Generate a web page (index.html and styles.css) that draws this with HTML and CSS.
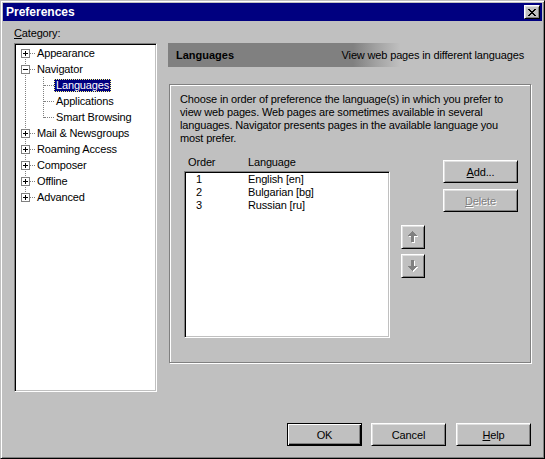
FILE: index.html
```html
<!DOCTYPE html>
<html>
<head>
<meta charset="utf-8">
<title>Preferences</title>
<link rel="stylesheet" href="styles.css">
</head>
<body>
<div class="window">
  <div class="titlebar">
    <span class="title">Preferences</span>
    <button class="btn close" type="button" aria-label="Close">
      <svg width="8" height="7" viewBox="0 0 8 7" shape-rendering="crispEdges"><path d="M0 0h2v1h-2zM6 0h2v1h-2zM1 1h2v1h-2zM5 1h2v1h-2zM2 2h4v1h-4zM3 3h2v1h-2zM2 4h4v1h-4zM1 5h2v1h-2zM5 5h2v1h-2zM0 6h2v1h-2zM6 6h2v1h-2z" fill="#000"/></svg>
    </button>
  </div>
  <div class="content">
    <div class="main">
      <div class="cat-label"><u>C</u>ategory:</div>
      <div class="tree">
        <div class="nodes">
          <div class="node"><svg class="exp" width="9" height="9" viewBox="0 0 9 9" shape-rendering="crispEdges"><path d="M0.5 0.5h8v8h-8z" fill="#fff" stroke="#808080"/><path d="M2 4h5v1h-5zM4 2h1v5h-1z" fill="#000"/></svg><span class="hline"></span><span class="lbl">Appearance</span></div>
          <div class="node"><svg class="exp" width="9" height="9" viewBox="0 0 9 9" shape-rendering="crispEdges"><path d="M0.5 0.5h8v8h-8z" fill="#fff" stroke="#808080"/><path d="M2 4h5v1h-5z" fill="#000"/></svg><span class="hline"></span><span class="lbl">Navigator</span></div>
          <div class="children">
            <div class="node child"><span class="hline long"></span><span class="lbl sel">Languages</span></div>
            <div class="node child"><span class="hline long"></span><span class="lbl">Applications</span></div>
            <div class="node child"><span class="hline long"></span><span class="lbl">Smart Browsing</span></div>
          </div>
          <div class="node"><svg class="exp" width="9" height="9" viewBox="0 0 9 9" shape-rendering="crispEdges"><path d="M0.5 0.5h8v8h-8z" fill="#fff" stroke="#808080"/><path d="M2 4h5v1h-5zM4 2h1v5h-1z" fill="#000"/></svg><span class="hline"></span><span class="lbl">Mail &amp; Newsgroups</span></div>
          <div class="node"><svg class="exp" width="9" height="9" viewBox="0 0 9 9" shape-rendering="crispEdges"><path d="M0.5 0.5h8v8h-8z" fill="#fff" stroke="#808080"/><path d="M2 4h5v1h-5zM4 2h1v5h-1z" fill="#000"/></svg><span class="hline"></span><span class="lbl">Roaming Access</span></div>
          <div class="node"><svg class="exp" width="9" height="9" viewBox="0 0 9 9" shape-rendering="crispEdges"><path d="M0.5 0.5h8v8h-8z" fill="#fff" stroke="#808080"/><path d="M2 4h5v1h-5zM4 2h1v5h-1z" fill="#000"/></svg><span class="hline"></span><span class="lbl">Composer</span></div>
          <div class="node"><svg class="exp" width="9" height="9" viewBox="0 0 9 9" shape-rendering="crispEdges"><path d="M0.5 0.5h8v8h-8z" fill="#fff" stroke="#808080"/><path d="M2 4h5v1h-5zM4 2h1v5h-1z" fill="#000"/></svg><span class="hline"></span><span class="lbl">Offline</span></div>
          <div class="node"><svg class="exp" width="9" height="9" viewBox="0 0 9 9" shape-rendering="crispEdges"><path d="M0.5 0.5h8v8h-8z" fill="#fff" stroke="#808080"/><path d="M2 4h5v1h-5zM4 2h1v5h-1z" fill="#000"/></svg><span class="hline"></span><span class="lbl">Advanced</span></div>
        </div>
      </div>
      <div class="panel">
        <div class="phead">
          <span class="phead-title">Languages</span>
          <span class="phead-sub">View web pages in different languages</span>
        </div>
        <div class="group">
          <p class="desc">Choose in order of preference the language(s) in which you prefer to<br>view web pages. Web pages are sometimes available in several<br>languages. Navigator presents pages in the available language you<br>most prefer.</p>
          <div class="lang-row">
            <div class="listcol">
              <div class="list-head"><span class="h-order">Order</span><span>Language</span></div>
              <div class="listbox">
                <div class="lrow"><span class="num">1</span><span>English [en]</span></div>
                <div class="lrow"><span class="num">2</span><span>Bulgarian [bg]</span></div>
                <div class="lrow"><span class="num">3</span><span>Russian [ru]</span></div>
              </div>
            </div>
            <div class="arrows">
              <button class="btn abtn" type="button" aria-label="Move up">
                <svg width="10" height="12" viewBox="0 0 10 12" shape-rendering="crispEdges"><path transform="translate(1 1)" d="M4 0h1v1h-1zM3 1h3v1h-3zM2 2h5v1h-5zM1 3h7v1h-7zM0 4h9v1h-9zM3 5h3v6h-3z" fill="#fff"/><path d="M4 0h1v1h-1zM3 1h3v1h-3zM2 2h5v1h-5zM1 3h7v1h-7zM0 4h9v1h-9zM3 5h3v6h-3z" fill="#808080"/></svg>
              </button>
              <button class="btn abtn" type="button" aria-label="Move down">
                <svg width="10" height="12" viewBox="0 0 10 12" shape-rendering="crispEdges"><path transform="translate(1 1)" d="M3 0h3v6h-3zM0 6h9v1h-9zM1 7h7v1h-7zM2 8h5v1h-5zM3 9h3v1h-3zM4 10h1v1h-1z" fill="#fff"/><path d="M3 0h3v6h-3zM0 6h9v1h-9zM1 7h7v1h-7zM2 8h5v1h-5zM3 9h3v1h-3zM4 10h1v1h-1z" fill="#808080"/></svg>
              </button>
            </div>
            <div class="actions">
              <button class="btn wide" type="button"><u>A</u>dd...</button>
              <button class="btn wide disabled" type="button"><u>D</u>elete</button>
            </div>
          </div>
        </div>
      </div>
    </div>
    <div class="footer">
      <button class="btn wide default" type="button">OK</button>
      <button class="btn wide" type="button">Cancel</button>
      <button class="btn wide help" type="button"><u>H</u>elp</button>
    </div>
  </div>
</div>
</body>
</html>
```

FILE: styles.css
```css
html, body {
  margin: 0;
  padding: 0;
  background: #c0c0c0;
}

body {
  font-family: "Liberation Sans", Arial, sans-serif;
  font-size: 11px;
  letter-spacing: -0.15px;
  color: #000;
}

.window {
  box-sizing: border-box;
  width: 545px;
  height: 459px;
  background: #c0c0c0;
  border: 1px solid;
  border-color: #c0c0c0 #000 #000 #c0c0c0;
  box-shadow: inset 1px 1px #fff, inset -1px -1px #808080;
  padding: 2px;
  display: flex;
  flex-direction: column;
}

.titlebar {
  height: 18px;
  flex: none;
  background: #000080;
  color: #fff;
  display: flex;
  align-items: center;
  justify-content: space-between;
  padding-left: 3px;
}

.title {
  font-weight: bold;
  font-size: 12px;
  letter-spacing: 0;
}

.btn {
  box-sizing: border-box;
  background: #c0c0c0;
  border: 1px solid;
  border-color: #fff #000 #000 #fff;
  box-shadow: inset 1px 1px #dfdfdf, inset -1px -1px #808080;
  font-family: "Liberation Sans", Arial, sans-serif;
  font-size: 11px;
  letter-spacing: -0.15px;
  color: #000;
  padding: 0;
  margin: 0;
  display: flex;
  align-items: center;
  justify-content: center;
}

.close {
  width: 16px;
  height: 14px;
  margin-right: 2px;
}

.content {
  flex: 1;
  display: flex;
  flex-direction: column;
  justify-content: space-between;
  padding: 5px 11px 10px 11px;
}

.main {
  display: grid;
  grid-template-columns: 143px 363px;
  grid-template-rows: 17px 349px;
  column-gap: 11px;
}

.cat-label {
  grid-column: 1;
  grid-row: 1;
  line-height: 15px;
}

.tree {
  grid-column: 1;
  grid-row: 2;
  box-sizing: border-box;
  background: #fff;
  border: 1px solid;
  border-color: #808080 #fff #fff #808080;
  box-shadow: inset 1px 1px #000, inset -1px -1px #c0c0c0;
  padding: 1px;
}

.nodes {
  background-image: repeating-linear-gradient(to bottom, #808080 0 1px, transparent 1px 2px);
  background-repeat: no-repeat;
  background-size: 1px 144px;
  background-position: 9px 8px;
}

.node {
  display: flex;
  align-items: flex-start;
  height: 16px;
}

.exp {
  display: block;
  flex: none;
  margin: 4px 0 0 5px;
}

.hline {
  width: 5px;
  height: 0;
  margin-top: 8px;
  border-top: 1px dotted #808080;
  flex: none;
}

.hline.long {
  width: 10px;
}

.node.child {
  padding-left: 28px;
}

.children {
  background-image: repeating-linear-gradient(to bottom, #808080 0 1px, transparent 1px 2px);
  background-repeat: no-repeat;
  background-size: 1px 41px;
  background-position: 27px 0;
}

.lbl {
  box-sizing: border-box;
  margin-top: 2px;
  height: 13px;
  line-height: 13px;
  padding: 0 2px;
  white-space: nowrap;
}

.lbl.sel {
  background: #000080;
  color: #fff;
  outline: 1px dotted #ffff80;
  outline-offset: -1px;
}

.panel {
  grid-column: 2;
  grid-row: 2;
  display: flex;
  flex-direction: column;
}

.phead {
  height: 24px;
  flex: none;
  display: flex;
  align-items: center;
  justify-content: space-between;
  padding: 0 7px 0 8px;
  background: linear-gradient(to right, #808080 0, #808080 51%, #a0a0a0 57%, #c0c0c0 64%, #c0c0c0 100%);
}

.phead-title {
  font-weight: bold;
  letter-spacing: 0;
}

.group {
  box-sizing: border-box;
  margin: 17px 0 0 1px;
  width: 362px;
  height: 279px;
  border: 1px solid #808080;
  box-shadow: inset 1px 1px #fff, 1px 1px #fff;
  padding: 8px 0 0 10px;
}

.desc {
  margin: 0;
  line-height: 13px;
  white-space: nowrap;
}

.lang-row {
  display: flex;
  align-items: flex-start;
  margin: 11px 0 0 4px;
}

.listcol {
  width: 206px;
  flex: none;
}

.list-head {
  display: flex;
  height: 15px;
  line-height: 13px;
}

.h-order {
  box-sizing: border-box;
  width: 64px;
  padding-left: 4px;
}

.listbox {
  box-sizing: border-box;
  height: 167px;
  background: #fff;
  border: 1px solid;
  border-color: #808080 #fff #fff #808080;
  box-shadow: inset 1px 1px #000, inset -1px -1px #c0c0c0;
  padding: 1px;
}

.lrow {
  display: flex;
  line-height: 13px;
}

.num {
  box-sizing: border-box;
  width: 62px;
  padding-left: 10px;
}

.arrows {
  display: flex;
  flex-direction: column;
  gap: 5px;
  margin: 69px 0 0 11px;
}

.abtn {
  width: 24px;
  height: 24px;
}

.actions {
  display: flex;
  flex-direction: column;
  gap: 6px;
  margin: 4px 0 0 18px;
}

.wide {
  width: 75px;
  height: 23px;
}

.disabled {
  color: #808080;
  text-shadow: 1px 1px #fff;
}

.default {
  border-color: #000;
  box-shadow: inset 1px 1px #fff, inset -1px -1px #000, inset -2px -2px #808080;
}

.footer {
  display: flex;
  justify-content: flex-end;
  gap: 9px;
}

.help {
  margin-left: 1px;
}
```
